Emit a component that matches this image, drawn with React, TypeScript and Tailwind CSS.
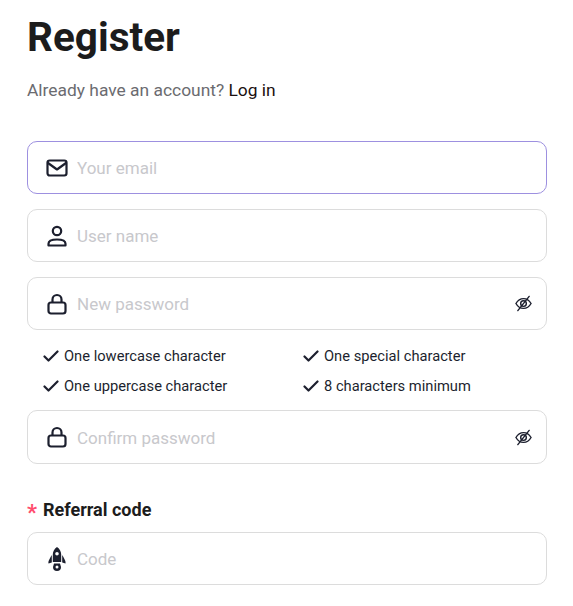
import { ReactNode } from 'react'

const FONT = "font-['Roboto',sans-serif]"

const MailIcon = () => (
  <svg width="22" height="22" viewBox="0 0 22 22" fill="none" stroke="#1c1f2e" strokeWidth="2.200" strokeLinejoin="round" strokeLinecap="round">
    <rect x="1.500" y="3.500" width="19" height="15" rx="2.200" />
    <path d="M2 6l9 6.500L20 6" />
  </svg>
)

const UserIcon = () => (
  <svg width="22" height="22" viewBox="0 0 22 22" fill="none" stroke="#1c1f2e" strokeWidth="2.200" strokeLinejoin="round">
    <circle cx="11" cy="6" r="4.200" />
    <path d="M2.500 20.500v-1.800c0-2.500 3-4.200 8.500-4.200s8.500 1.700 8.500 4.200v1.800z" />
  </svg>
)

const LockIcon = () => (
  <svg width="22" height="22" viewBox="0 0 22 22" fill="none" stroke="#1c1f2e" strokeWidth="2.200" strokeLinejoin="round">
    <rect x="2.500" y="9.500" width="17" height="11" rx="2.500" />
    <path d="M6.500 9.500V6.500a4.500 4.500 0 0 1 9 0v3" />
  </svg>
)

const RocketIcon = () => (
  <svg width="18" height="24" viewBox="0 0 18 24" fill="#1c1f2e">
    <path fillRule="evenodd" d="M9 0c2.800 2 4.200 4.600 4.200 7.600v7.400H4.800V7.600C4.800 4.600 6.200 2 9 0zm0 5a1.800 1.800 0 1 0 0 3.600A1.800 1.800 0 0 0 9 5z" />
    <path d="M3.800 8v7.500L0.500 16.500c-.4-2 .6-4 3.300-8.500zM14.200 8v7.500l3.300 1c.4-2-.6-4-3.300-8.500z" />
    <path fillRule="evenodd" d="M6 16.500h6l1 3.500a4 4 0 0 1-8 0zM9 18.500a1.500 1.500 0 1 0 0 3 1.500 1.500 0 0 0 0-3z" />
  </svg>
)

const EyeOffIcon = () => (
  <svg width="17" height="17" viewBox="0 0 18 18" fill="none" stroke="#1c1f2e" strokeWidth="1.500" strokeLinecap="round">
    <path d="M1 9c2-3.500 4.700-5.200 8-5.200S15 5.500 17 9c-2 3.500-4.700 5.200-8 5.200S3 12.500 1 9z" />
    <circle cx="9" cy="9" r="3" />
    <path d="M15 1.500L3 16.500" />
  </svg>
)

const CheckIcon = () => (
  <svg width="16" height="12" viewBox="0 0 16 12" fill="none" stroke="#1c1f2e" strokeWidth="2.200" strokeLinecap="round" strokeLinejoin="round">
    <path d="M1.500 6.500l4 4 9-9" />
  </svg>
)

function Field({ icon, placeholder, active, eye, tall }: { icon: ReactNode; placeholder: string; active?: boolean; eye?: boolean; tall?: boolean }) {
  return (
    <div className={`flex w-[520px] items-center rounded-[10px] border pl-[18px] pr-[14px] ${tall ? 'h-[54px]' : 'h-[53px]'} ${active ? 'border-[#9d90e0]' : 'border-[#dcdcdc]'}`}>
      <span className="flex w-[22px] shrink-0 justify-center">{icon}</span>
      <input
        placeholder={placeholder}
        className="ml-[9px] min-w-0 flex-1 bg-transparent pt-[3px] text-[17px] outline-none placeholder:text-[#c8c8cc]"
      />
      {eye && <EyeOffIcon />}
    </div>
  )
}

const CHECKS = ['One lowercase character', 'One special character', 'One uppercase character', '8 characters minimum']

export default function App() {
  return (
    <div className={`${FONT} h-[606px] w-[573px] overflow-hidden bg-white pl-[27px] text-[#1c1c1c]`}>
      <h1 className="pt-[10px] text-[40.5px] leading-[54px] font-bold">Register</h1>
      <p className="mt-[14px] text-[17.4px] leading-[24px] text-[#6b6b70]">
        Already have an account? <span className="text-[#1a1010]">Log in</span>
      </p>

      <div className="mt-[39px] flex flex-col gap-[15px]">
        <Field icon={<MailIcon />} placeholder="Your email" active />
        <Field icon={<UserIcon />} placeholder="User name" />
        <Field icon={<LockIcon />} placeholder="New password" eye />
      </div>

      <div className="mt-[16px] grid w-[520px] grid-cols-[260px_1fr] gap-y-[10px] pl-[16px]">
        {CHECKS.map((c) => (
          <div key={c} className="flex h-[20px] items-center gap-[5px] text-[14.7px] text-[#1c1f2e]">
            <CheckIcon />
            <span>{c}</span>
          </div>
        ))}
      </div>

      <div className="mt-[14px]">
        <Field icon={<LockIcon />} placeholder="Confirm password" eye tall />
      </div>

      <div className="mt-[33px] flex h-[24px] items-center gap-[6px] text-[18px] font-bold">
        <span className="pt-[8px] text-[22px] leading-[24px] text-[#ff4d6d]">*</span>
        <span>Referral code</span>
      </div>

      <div className="mt-[11px]">
        <Field icon={<RocketIcon />} placeholder="Code" />
      </div>
    </div>
  )
}
